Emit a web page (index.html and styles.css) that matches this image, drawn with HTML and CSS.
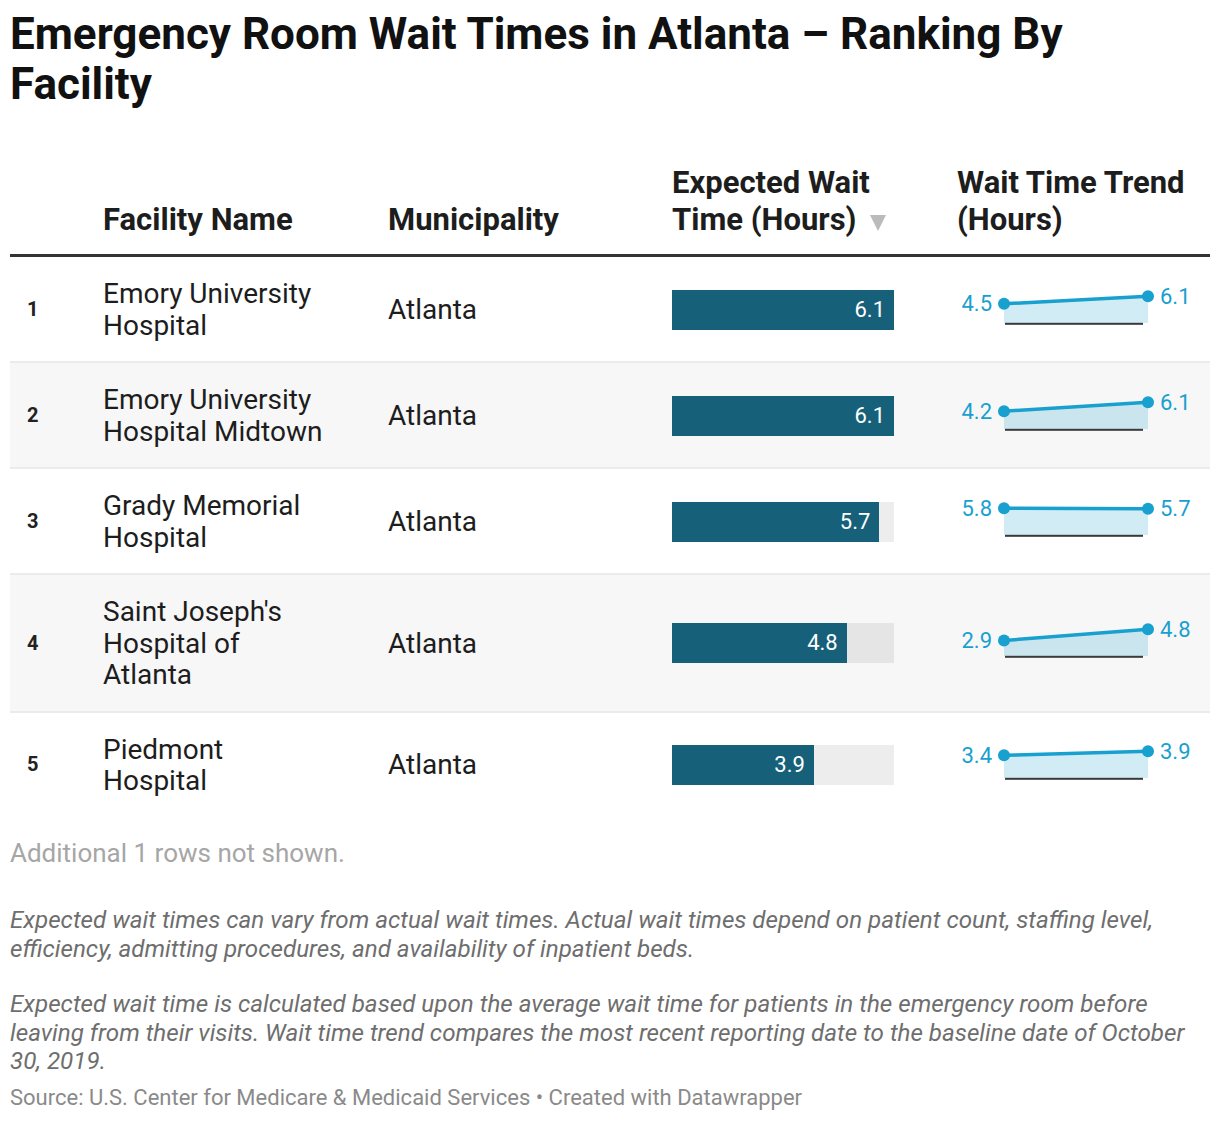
FILE: index.html
```html
<!DOCTYPE html>
<html lang="en">
<head>
<meta charset="utf-8">
<title>Emergency Room Wait Times in Atlanta</title>
<link rel="stylesheet" href="styles.css">
</head>
<body>
<div class="chart">
  <h1 class="title">Emergency Room Wait Times in Atlanta – Ranking By Facility</h1>
  <table class="tbl">
    <colgroup>
      <col class="w-rank"><col class="w-name"><col class="w-muni"><col class="w-bar"><col class="w-trend">
    </colgroup>
    <thead>
      <tr>
        <th class="rank"></th>
        <th>Facility Name</th>
        <th>Municipality</th>
        <th>Expected Wait<br>Time (Hours)<svg class="sort" width="16" height="16" viewBox="0 0 16 16"><polygon points="0,0 16,0 8,16" fill="#bbbbbb"/></svg></th>
        <th>Wait Time Trend<br>(Hours)</th>
      </tr>
    </thead>
    <tbody>
      <tr>
        <td class="rank">1</td>
        <td>Emory University<br>Hospital</td>
        <td>Atlanta</td>
        <td><div class="track"><div class="fill" style="width:100%"><span class="val">6.1</span></div></div></td>
        <td class="trend">
          <svg class="spark" width="255" height="44" viewBox="0 1 255 44">
            <polygon class="area" points="49,16.8 193,9.2 193,36 49,36"/>
            <rect class="base" x="50" y="35.8" width="138" height="2"/>
            <line class="ln" x1="49" y1="16.8" x2="193" y2="9.2"/>
            <circle class="dot" cx="49" cy="16.8" r="6"/>
            <circle class="dot" cx="193" cy="9.2" r="6"/>
            <text class="lab" x="37" y="16.8" text-anchor="end">4.5</text>
            <text class="lab" x="205" y="9.2">6.1</text>
          </svg>
        </td>
      </tr>
      <tr>
        <td class="rank">2</td>
        <td>Emory University<br>Hospital Midtown</td>
        <td>Atlanta</td>
        <td><div class="track"><div class="fill" style="width:100%"><span class="val">6.1</span></div></div></td>
        <td class="trend">
          <svg class="spark" width="255" height="44" viewBox="0 1 255 44">
            <polygon class="area" points="49,18.2 193,9.2 193,36 49,36"/>
            <rect class="base" x="50" y="35.8" width="138" height="2"/>
            <line class="ln" x1="49" y1="18.2" x2="193" y2="9.2"/>
            <circle class="dot" cx="49" cy="18.2" r="6"/>
            <circle class="dot" cx="193" cy="9.2" r="6"/>
            <text class="lab" x="37" y="18.2" text-anchor="end">4.2</text>
            <text class="lab" x="205" y="9.2">6.1</text>
          </svg>
        </td>
      </tr>
      <tr>
        <td class="rank">3</td>
        <td>Grady Memorial<br>Hospital</td>
        <td>Atlanta</td>
        <td><div class="track"><div class="fill" style="width:93.4%"><span class="val">5.7</span></div></div></td>
        <td class="trend">
          <svg class="spark" width="255" height="44" viewBox="0 1 255 44">
            <polygon class="area" points="49,9.2 193,9.8 193,36 49,36"/>
            <rect class="base" x="50" y="35.8" width="138" height="2"/>
            <line class="ln" x1="49" y1="9.2" x2="193" y2="9.8"/>
            <circle class="dot" cx="49" cy="9.2" r="6"/>
            <circle class="dot" cx="193" cy="9.8" r="6"/>
            <text class="lab" x="37" y="9.2" text-anchor="end">5.8</text>
            <text class="lab" x="205" y="9.2">5.7</text>
          </svg>
        </td>
      </tr>
      <tr>
        <td class="rank">4</td>
        <td>Saint Joseph's<br>Hospital of<br>Atlanta</td>
        <td>Atlanta</td>
        <td><div class="track"><div class="fill" style="width:78.7%"><span class="val">4.8</span></div></div></td>
        <td class="trend">
          <svg class="spark" width="255" height="44" viewBox="0 1 255 44">
            <polygon class="area" points="49,20.5 193,9.2 193,36 49,36"/>
            <rect class="base" x="50" y="35.8" width="138" height="2"/>
            <line class="ln" x1="49" y1="20.5" x2="193" y2="9.2"/>
            <circle class="dot" cx="49" cy="20.5" r="6"/>
            <circle class="dot" cx="193" cy="9.2" r="6"/>
            <text class="lab" x="37" y="20.5" text-anchor="end">2.9</text>
            <text class="lab" x="205" y="9.2">4.8</text>
          </svg>
        </td>
      </tr>
      <tr>
        <td class="rank">5</td>
        <td>Piedmont<br>Hospital</td>
        <td>Atlanta</td>
        <td><div class="track"><div class="fill" style="width:63.9%"><span class="val">3.9</span></div></div></td>
        <td class="trend">
          <svg class="spark" width="255" height="44" viewBox="0 1 255 44">
            <polygon class="area" points="49,13.3 193,9.2 193,36 49,36"/>
            <rect class="base" x="50" y="35.8" width="138" height="2"/>
            <line class="ln" x1="49" y1="13.3" x2="193" y2="9.2"/>
            <circle class="dot" cx="49" cy="13.3" r="6"/>
            <circle class="dot" cx="193" cy="9.2" r="6"/>
            <text class="lab" x="37" y="13.3" text-anchor="end">3.4</text>
            <text class="lab" x="205" y="9.2">3.9</text>
          </svg>
        </td>
      </tr>
    </tbody>
  </table>
  <p class="more">Additional 1 rows not shown.</p>
  <div class="notes">
    <p>Expected wait times can vary from actual wait times. Actual wait times depend on patient count, staffing level, efficiency, admitting procedures, and availability of inpatient beds.</p>
    <p>Expected wait time is calculated based upon the average wait time for patients in the emergency room before leaving from their visits. Wait time trend compares the most recent reporting date to the baseline date of October 30, 2019.</p>
  </div>
  <p class="source">Source: U.S. Center for Medicare &amp; Medicaid Services • Created with Datawrapper</p>
</div>
</body>
</html>
```

FILE: styles.css
```css
html, body {
  margin: 0;
  background: #ffffff;
}
body {
  font-family: Roboto, "Noto Sans", "Liberation Sans", sans-serif;
  color: #1d1d1d;
}
.chart {
  width: 1200px;
  padding: 9px 10px 0 10px;
}
.title {
  margin: 0;
  max-width: 1120px;
  font-size: 44px;
  line-height: 50px;
  font-weight: 700;
  color: #111111;
}
.tbl {
  margin-top: 55px;
  width: 1200px;
  border-collapse: separate;
  border-spacing: 0;
  table-layout: fixed;
}
.w-rank { width: 91px; }
.w-name { width: 285px; }
.w-muni { width: 284px; }
.w-bar { width: 285px; }
.w-trend { width: 255px; }

.tbl th {
  font-size: 31px;
  line-height: 37px;
  font-weight: 700;
  text-align: left;
  vertical-align: bottom;
  padding: 0 0 16px 2px;
  border-bottom: 3px solid #333333;
  color: #1d1d1d;
}
.sort {
  margin-left: 14px;
  vertical-align: -1px;
}
.tbl td {
  font-size: 28px;
  line-height: 31.5px;
  padding: 21px 0 20px 2px;
  vertical-align: middle;
  border-bottom: 2px solid #ebebeb;
}
.tbl tbody tr:last-child td {
  border-bottom: 0;
}
.tbl tbody tr:nth-child(even) td {
  background: #f7f7f7;
}
.tbl td.rank, .tbl th.rank {
  padding-left: 17px;
}
.tbl td.rank {
  font-weight: 700;
  font-size: 20px;
  color: #222222;
}
.tbl td.trend {
  padding-left: 0;
}
.track {
  width: 222px;
  height: 40px;
  background: rgba(0, 0, 0, 0.07);
}
.fill {
  height: 40px;
  background: #17607a;
  display: flex;
  align-items: center;
  justify-content: flex-end;
}
.val {
  color: #ffffff;
  font-size: 22px;
  line-height: 24px;
  padding-right: 9px;
}
.spark {
  display: block;
  overflow: visible;
}
.spark .area {
  fill: rgba(24, 160, 207, 0.2);
}
.spark .base {
  fill: #3a3a3a;
}
.spark .ln {
  stroke: #18a0cf;
  stroke-width: 3.5;
}
.spark .dot {
  fill: #18a0cf;
}
.spark .lab {
  fill: #18a0cf;
  font-family: Roboto, "Noto Sans", sans-serif;
  font-size: 22px;
  dominant-baseline: central;
}
.more {
  margin: 20px 0 0 0;
  font-size: 26px;
  line-height: 32px;
  color: #a6a6a6;
}
.notes {
  margin-top: 37.9px;
}
.notes p {
  margin: 0;
  font-style: italic;
  font-size: 24.2px;
  line-height: 28.4px;
  color: #6e6e6e;
}
.notes p + p {
  margin-top: 27.2px;
}
.source {
  margin: 9.4px 0 0 0;
  font-size: 22px;
  line-height: 26px;
  color: #8a8a8a;
}
```
